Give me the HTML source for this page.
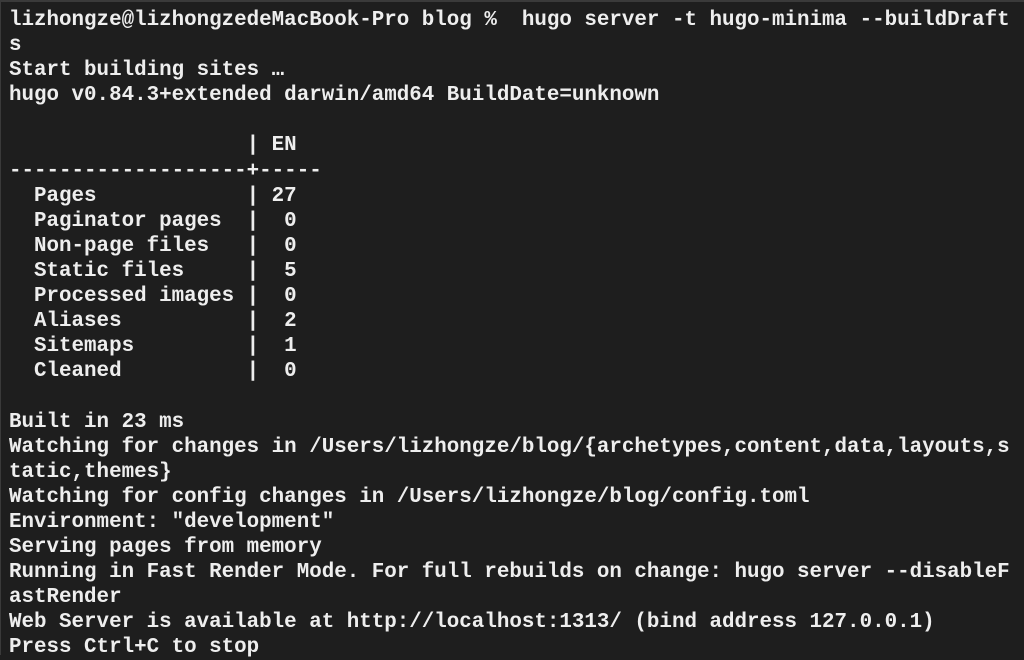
<!DOCTYPE html>
<html><head><meta charset="utf-8"><style>
html,body{margin:0;padding:0;}
body{width:1024px;height:655px;overflow:hidden;background:#1e1e1e;border-top:2px solid #3a3a3a;border-left:1px solid #3a3a3a;box-sizing:border-box;}
pre{margin:0;position:absolute;left:9px;top:8px;font-family:"Liberation Mono",monospace;font-size:20.85px;line-height:25.1px;color:#eeeeee;font-weight:bold;letter-spacing:0;}
</style></head><body><pre>lizhongze@lizhongzedeMacBook-Pro blog %  hugo server -t hugo-minima --buildDraft
s
Start building sites …
hugo v0.84.3+extended darwin/amd64 BuildDate=unknown

                   | EN
-------------------+-----
  Pages            | 27
  Paginator pages  |  0
  Non-page files   |  0
  Static files     |  5
  Processed images |  0
  Aliases          |  2
  Sitemaps         |  1
  Cleaned          |  0

Built in 23 ms
Watching for changes in /Users/lizhongze/blog/{archetypes,content,data,layouts,s
tatic,themes}
Watching for config changes in /Users/lizhongze/blog/config.toml
Environment: "development"
Serving pages from memory
Running in Fast Render Mode. For full rebuilds on change: hugo server --disableF
astRender
Web Server is available at http://localhost:1313/ (bind address 127.0.0.1)
Press Ctrl+C to stop</pre></body></html>
